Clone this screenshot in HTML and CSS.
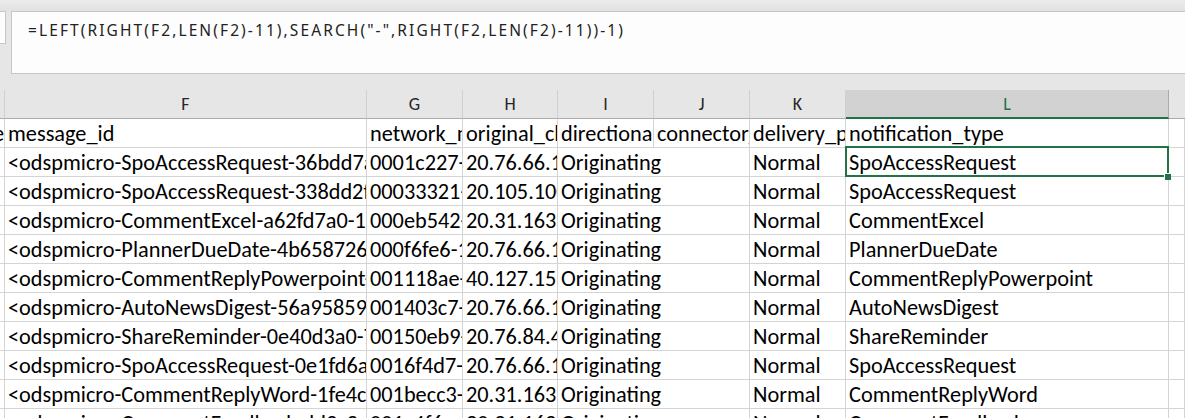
FILE: index.html
```html
<!DOCTYPE html>
<html>
<head>
<meta charset="utf-8">
<link rel="stylesheet" href="styles.css">
</head>
<body>
<div class="app">
  <div class="topstrip"></div>
  <div class="formula-row">
    <div class="stub"></div>
    <div class="formula">=LEFT(RIGHT(F2,LEN(F2)-11),SEARCH("-",RIGHT(F2,LEN(F2)-11))-1)</div>
  </div>
  <div class="sheet">
    <div class="hdr"></div>
    <div class="hdr">F</div>
    <div class="hdr">G</div>
    <div class="hdr">H</div>
    <div class="hdr">I</div>
    <div class="hdr">J</div>
    <div class="hdr">K</div>
    <div class="hdr hdr-sel">L</div>
    <div class="hdr hdr-last"></div>

    <div class="c ce">type</div>
    <div class="c">message_id</div>
    <div class="c">network_message_id</div>
    <div class="c">original_client_ip</div>
    <div class="c">directionality</div>
    <div class="c">connector_id</div>
    <div class="c">delivery_priority</div>
    <div class="c">notification_type</div>
    <div class="c"></div>

    <div class="c ce"></div>
    <div class="c">&lt;odspmicro-SpoAccessRequest-36bdd7a1-4c2e-44f1</div>
    <div class="c">0001c227-8f3a-4d1e</div>
    <div class="c">20.76.66.139</div>
    <div class="c span2">Originating</div>
    <div class="c">Normal</div>
    <div class="c sel">SpoAccessRequest<span class="handle"></span></div>
    <div class="c"></div>

    <div class="c ce"></div>
    <div class="c">&lt;odspmicro-SpoAccessRequest-338dd2f0-9b1a-4e77</div>
    <div class="c">00033321-6a2b-4c90</div>
    <div class="c">20.105.100.41</div>
    <div class="c span2">Originating</div>
    <div class="c">Normal</div>
    <div class="c">SpoAccessRequest</div>
    <div class="c"></div>

    <div class="c ce"></div>
    <div class="c">&lt;odspmicro-CommentExcel-a62fd7a0-1e3b-4a8c-9d21</div>
    <div class="c">000eb542-3c7d-4f01</div>
    <div class="c">20.31.163.22</div>
    <div class="c span2">Originating</div>
    <div class="c">Normal</div>
    <div class="c">CommentExcel</div>
    <div class="c"></div>

    <div class="c ce"></div>
    <div class="c">&lt;odspmicro-PlannerDueDate-4b658726-0c1d-4e5f</div>
    <div class="c">000f6fe6-1b2c-4d3e</div>
    <div class="c">20.76.66.139</div>
    <div class="c span2">Originating</div>
    <div class="c">Normal</div>
    <div class="c">PlannerDueDate</div>
    <div class="c"></div>

    <div class="c ce"></div>
    <div class="c">&lt;odspmicro-CommentReplyPowerpoint-7a1b2c3d-4e5f</div>
    <div class="c">001118ae-2d4f-4a6b</div>
    <div class="c">40.127.155.10</div>
    <div class="c span2">Originating</div>
    <div class="c">Normal</div>
    <div class="c">CommentReplyPowerpoint</div>
    <div class="c"></div>

    <div class="c ce"></div>
    <div class="c">&lt;odspmicro-AutoNewsDigest-56a95859-3e2d-4c1b</div>
    <div class="c">001403c7-5e6f-4a7b</div>
    <div class="c">20.76.66.139</div>
    <div class="c span2">Originating</div>
    <div class="c">Normal</div>
    <div class="c">AutoNewsDigest</div>
    <div class="c"></div>

    <div class="c ce"></div>
    <div class="c">&lt;odspmicro-ShareReminder-0e40d3a0-7f8e-4d9c</div>
    <div class="c">00150eb9-8a7b-4c6d</div>
    <div class="c">20.76.84.45</div>
    <div class="c span2">Originating</div>
    <div class="c">Normal</div>
    <div class="c">ShareReminder</div>
    <div class="c"></div>

    <div class="c ce"></div>
    <div class="c">&lt;odspmicro-SpoAccessRequest-0e1fd6a2-5b4c-4d3e</div>
    <div class="c">0016f4d7-9c8d-4e7f</div>
    <div class="c">20.76.66.139</div>
    <div class="c span2">Originating</div>
    <div class="c">Normal</div>
    <div class="c">SpoAccessRequest</div>
    <div class="c"></div>

    <div class="c ce"></div>
    <div class="c">&lt;odspmicro-CommentReplyWord-1fe4c0d1-2e3f-4a5b</div>
    <div class="c">001becc3-0a1b-4c2d</div>
    <div class="c">20.31.163.22</div>
    <div class="c span2">Originating</div>
    <div class="c">Normal</div>
    <div class="c">CommentReplyWord</div>
    <div class="c"></div>

    <div class="c ce"></div>
    <div class="c">&lt;odspmicro-CommentFeedback-dd3c2e1f-4a5b-4c6d</div>
    <div class="c">001c4f6e-1b2c-4d3e</div>
    <div class="c">20.31.163.22</div>
    <div class="c span2">Originating</div>
    <div class="c">Normal</div>
    <div class="c">CommentFeedback</div>
    <div class="c"></div>
  </div>
</div>
</body>
</html>
```

FILE: styles.css
```css
html, body {
  margin: 0;
  padding: 0;
  background: #e6e6e6;
  overflow: hidden;
}

.app {
  width: 1185px;
  height: 418px;
  overflow: hidden;
}

.topstrip {
  height: 11px;
  background: linear-gradient(#ebebeb, #e2e2e2);
}

.formula-row {
  display: flex;
  gap: 5px;
  height: 63px;
  align-items: flex-start;
}

.stub {
  width: 6px;
  height: 33px;
  background: #fdfdfd;
  border-right: 1px solid #c6c6c6;
  border-bottom: 1px solid #c6c6c6;
  border-top: 1px solid #c6c6c6;
  box-sizing: border-box;
}

.formula {
  flex: 1;
  height: 63px;
  box-sizing: border-box;
  background: #fdfdfd;
  border-top: 1px solid #c6c6c6;
  border-bottom: 1px solid #c6c6c6;
  border-left: 1px solid #c6c6c6;
  padding: 7px 0 0 16px;
  font-family: "Noto Sans", "Open Sans", sans-serif;
  font-size: 15.5px;
  letter-spacing: 2.1px;
  color: #222;
  white-space: nowrap;
}

.sheet {
  margin-top: 16px;
  display: grid;
  grid-template-columns: 5px 362px 96px 95px 96px 96px 96px 323px 1fr;
  grid-auto-rows: 29px;
  font-family: "Carlito", "Lato", sans-serif;
}

.hdr {
  box-sizing: border-box;
  background: #e6e6e6;
  border-right: 1px solid #d0d0d0;
  border-bottom: 1px solid #ababab;
  color: #262626;
  font-size: 18px;
  text-align: center;
  line-height: 28px;
}

.hdr-sel {
  background: #d2d2d2;
  color: #217346;
  border-bottom: 2px solid #217346;
  border-right-color: #ababab;
}

.hdr-last {
  border-right: none;
}

.c {
  box-sizing: border-box;
  background: #fff;
  border-right: 1px solid #d4d4d4;
  border-bottom: 1px solid #d4d4d4;
  font-size: 22.3px;
  color: #000;
  white-space: nowrap;
  overflow: hidden;
  padding: 0 0 0 3px;
  line-height: 30px;
}

.ce {
  padding: 0;
  text-align: right;
  direction: rtl;
}

.span2 {
  grid-column: span 2;
}

.sel {
  position: relative;
  overflow: visible;
}

.sel::after {
  content: "";
  position: absolute;
  left: -1px;
  top: -2px;
  right: -1px;
  bottom: -1px;
  border: 2px solid #217346;
}

.handle {
  position: absolute;
  right: -3px;
  bottom: -4px;
  width: 6px;
  height: 6px;
  background: #217346;
  border-left: 1px solid #fff;
  border-top: 1px solid #fff;
  z-index: 2;
}
```
